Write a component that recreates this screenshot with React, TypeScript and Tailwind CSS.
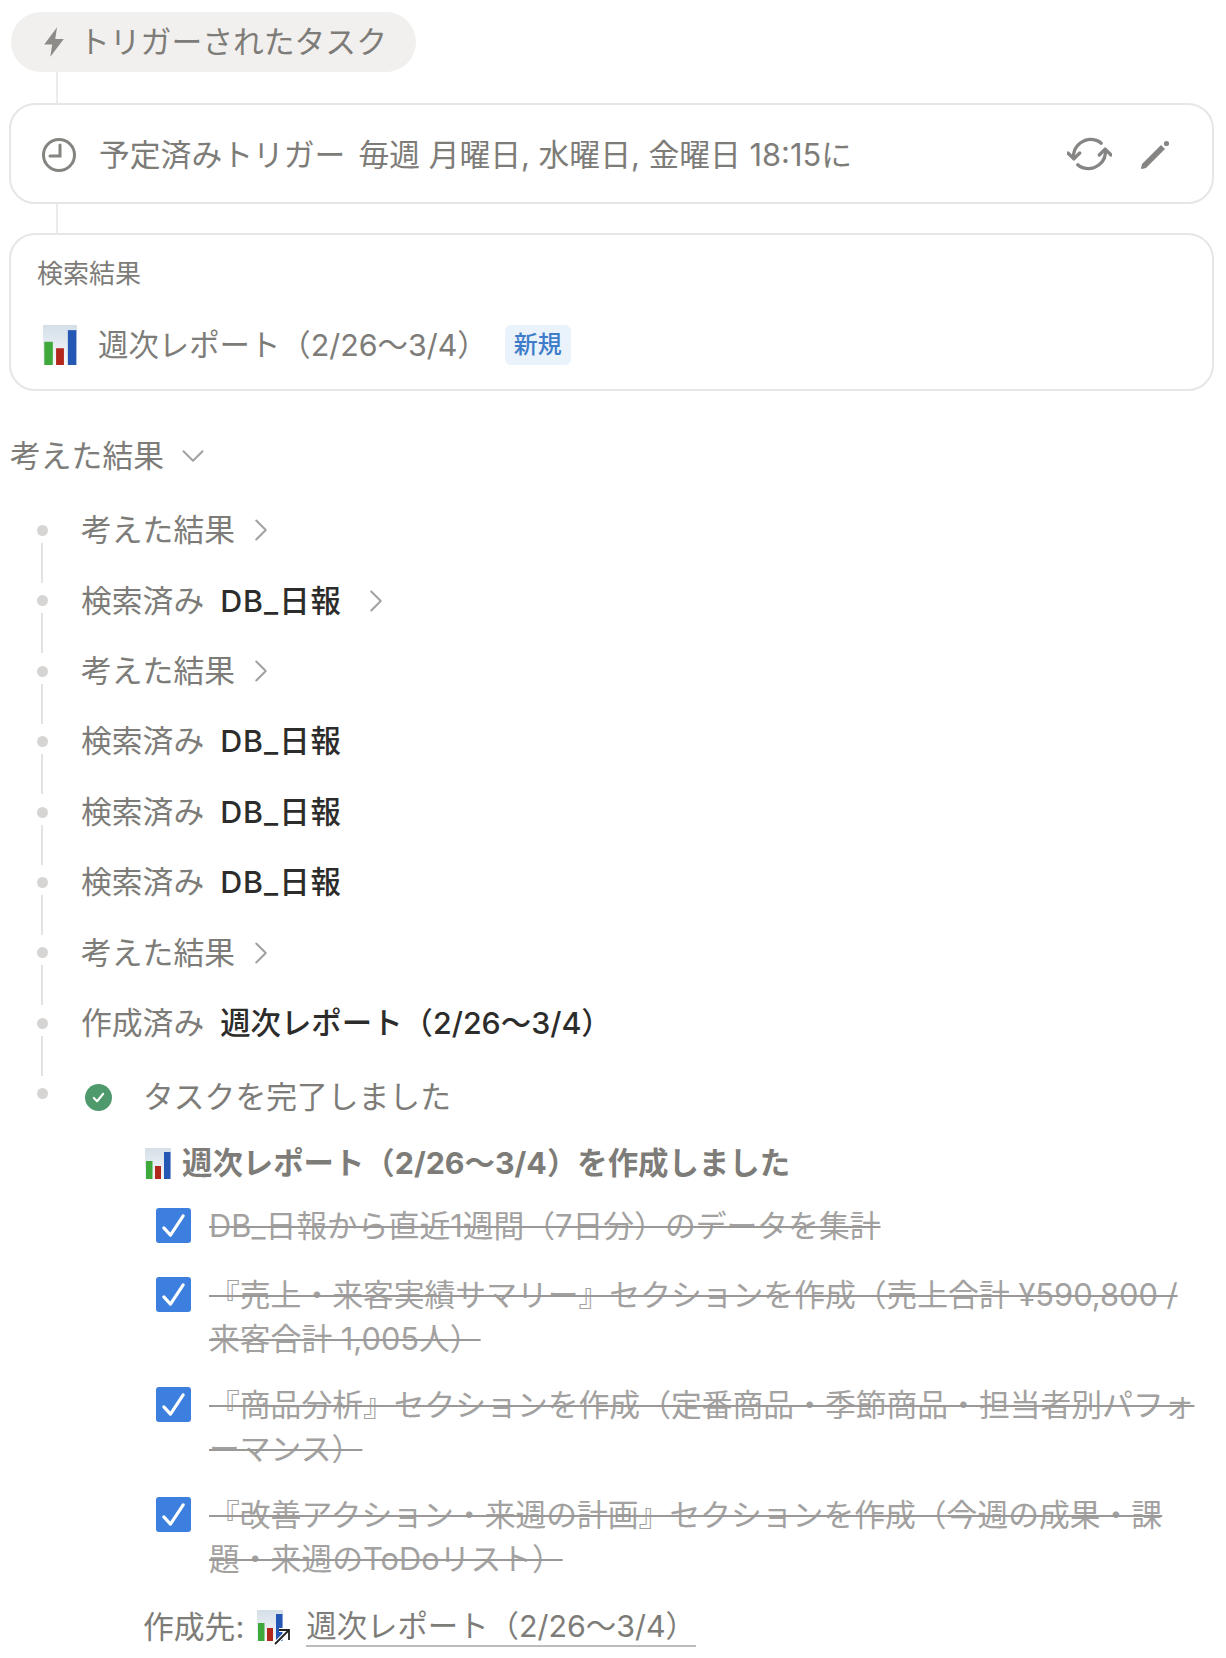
import { ChevronDown, ChevronRight } from "lucide-react";

const ChartIcon = ({ className }: { className: string }) => (
  <svg viewBox="0 0 26 31" className={className} preserveAspectRatio="none">
    <defs>
      <linearGradient id="chartBg" x1="0" y1="0" x2="0" y2="1">
        <stop offset="0" stopColor="#d5dfe8" />
        <stop offset="1" stopColor="#f6f8fa" />
      </linearGradient>
    </defs>
    <rect width="26" height="31" fill="url(#chartBg)" />
    <rect x="1" y="13" width="6.5" height="18" fill="#3fa83a" />
    <rect x="10" y="18" width="6" height="13" fill="#b3261c" />
    <rect x="19" y="4" width="6.5" height="27" fill="#2558b4" />
  </svg>
);

const Connector = ({ className }: { className: string }) => <div className={`ml-[47px] w-[2px] bg-[#ecebe9] ${className}`} />;

const Row = ({ label, name, chevron }: { label: string; name?: string; chevron?: boolean }) => (
  <div className="flex h-[70.4px] items-start">
    <div className="ml-[27px] mr-[33px] flex w-[12px] flex-col items-center pt-[30px]">
      <div className="h-[11px] w-[11px] shrink-0 rounded-full bg-[#d6d5d3]" />
      <div className="mt-[7px] h-[40px] w-[2px] shrink-0 bg-[#e3e2e0]" />
    </div>
    <div className="flex h-full items-center">
      <span className="text-[#7d7c78]">{label}</span>
      {name && (
        <span className={`ml-[16px] text-[30.4px] font-medium text-[#2c2c2b] ${name === "DB_日報" ? "tracking-[1px]" : ""}`}>{name}</span>
      )}
      {chevron && (
        <ChevronRight className={`${name ? "ml-[15px]" : "ml-[7px]"} h-[38px] w-[38px] text-[#a3a2a0]`} strokeWidth={1.3} />
      )}
    </div>
  </div>
);

const Todo = ({ lines, className }: { lines: string[]; className: string }) => (
  <div className={`ml-[71px] flex items-start ${className}`}>
    <div className="mt-[4px] flex h-[35px] w-[35px] shrink-0 items-center justify-center rounded-[3px] bg-[#3d7fdf]">
      <svg viewBox="0 0 24 24" className="h-[29px] w-[29px]" fill="none" stroke="white" strokeWidth="2.6" strokeLinecap="round" strokeLinejoin="round">
        <path d="M4 14l5.5 6L20 4" />
      </svg>
    </div>
    <div className="ml-[18px] text-[#a2a19f] line-through decoration-[#9a9997] decoration-2 leading-[44px] whitespace-nowrap">
      {lines.map((line) => (
        <div key={line}>{line}</div>
      ))}
    </div>
  </div>
);

export default function App() {
  return (
    <div className="h-[1658px] w-[1226px] overflow-hidden bg-white pl-[9px] pr-[12px] pt-[12px] font-['Inter','Noto_Sans_CJK_JP',sans-serif] text-[30.8px] leading-[40px]">
      <div className="ml-[2px] flex h-[60px] w-[405px] items-center rounded-full bg-[#f1f0ee] pl-[32px] text-[#7d7c78]">
        <svg viewBox="0 0 18 24" className="h-[30px] w-[22px]" fill="#8c8b88">
          <path d="M11.5 0 1 14h6.5L6 24 17 9.5h-7z" />
        </svg>
        <span className="ml-[14px]">トリガーされたタスク</span>
      </div>
      <Connector className="h-[31px]" />
      <div className="flex h-[101px] items-center rounded-[26px] border-2 border-[#e7e6e4] pl-[30px] pr-[43px] pt-[3px] text-[#7d7c78]">
        <svg viewBox="0 0 36 36" className="h-[36px] w-[36px]" fill="none" stroke="#858481" strokeWidth="3">
          <circle cx="18" cy="18" r="15.5" />
          <path d="M19 8v11H9" strokeLinecap="round" />
        </svg>
        <span className="ml-[22px]">予定済みトリガー</span>
        <span className="ml-[13px]">毎週 月曜日, 水曜日, 金曜日 18:15に</span>
        <svg viewBox="0 0 46 38" className="ml-auto -mt-[2px] h-[38px] w-[45px]" fill="none" stroke="#868583" strokeWidth="3.4" strokeLinecap="round" strokeLinejoin="round">
          <path d="M7 23C5 11 18 1 30 5c2 .7 3.5 1.6 5 3" />
          <path d="M39 15c2 12-11 22-23 18-2-.7-3.5-1.6-5-3" />
          <path d="M1 18l6 6 6-6" />
          <path d="M33 20l6-6 6 6" />
        </svg>
        <svg viewBox="0 0 28 30" className="ml-[29px] h-[30px] w-[28px]" fill="#868583">
          <path d="M1 24 20 5l4 4L5 28l-4 1c-1 0-1-1-1-1z" />
          <circle cx="25.5" cy="3.5" r="2.6" />
        </svg>
      </div>
      <Connector className="h-[29px]" />
      <div className="h-[158px] rounded-[26px] border-2 border-[#e7e6e4] pl-[26px] pt-[21px]">
        <div className="text-[26px] leading-[36px] text-[#7d7c78]">検索結果</div>
        <div className="mt-[33px] flex items-center">
          <ChartIcon className="ml-[6px] h-[40px] w-[34px]" />
          <span className="ml-[21px] text-[30.4px] text-[#7d7c78]">週次レポート（2/26〜3/4）</span>
          <span className="ml-[17px] rounded-[6px] bg-[#eaf2fb] px-[9px] py-[2px] text-[24px] font-medium leading-[36px] text-[#3f7cc9]">新規</span>
        </div>
      </div>

      <div className="mt-[35px] flex h-[60px] items-center text-[#7d7c78]">
        <span className="ml-[1px]">考えた結果</span>
        <ChevronDown className="ml-[10px] h-[38px] w-[38px] text-[#a3a2a0]" strokeWidth={1.3} />
      </div>

      <div className="mt-[9px]">
        <Row label="考えた結果" chevron />
        <Row label="検索済み" name="DB_日報" chevron />
        <Row label="考えた結果" chevron />
        <Row label="検索済み" name="DB_日報" />
        <Row label="検索済み" name="DB_日報" />
        <Row label="検索済み" name="DB_日報" />
        <Row label="考えた結果" chevron />
        <Row label="作成済み" name="週次レポート（2/26〜3/4）" />
      </div>

      <div className="mt-[19px] flex items-start">
        <div className="ml-[27px] mr-[37px] flex w-[12px] justify-center pt-[11px]">
          <div className="h-[11px] w-[11px] rounded-full bg-[#d6d5d3]" />
        </div>
        <div className="min-w-0 flex-1">
          <div className="flex h-[40px] items-center text-[#7d7c78]">
            <div className="flex h-[27px] w-[27px] items-center justify-center rounded-full bg-[#4f9a6c]">
              <svg viewBox="0 0 16 16" className="h-[15px] w-[15px]" fill="none" stroke="white" strokeWidth="2.2" strokeLinecap="round" strokeLinejoin="round">
                <path d="M3 8.5 6.5 12 13 4" />
              </svg>
            </div>
            <span className="ml-[31px]">タスクを完了しました</span>
          </div>
          <div className="ml-[60px] mt-[26px] flex h-[40px] items-center text-[30.4px] font-bold text-[#7d7c78]">
            <ChartIcon className="h-[31px] w-[26px]" />
            <span className="ml-[11px]">週次レポート（2/26〜3/4）を作成しました</span>
          </div>
          <Todo className="mt-[21px]" lines={["DB_日報から直近1週間（7日分）のデータを集計"]} />
          <Todo className="mt-[25px]" lines={["『売上・来客実績サマリー』セクションを作成（売上合計 ¥590,800 /", "来客合計 1,005人）"]} />
          <Todo className="mt-[22px]" lines={["『商品分析』セクションを作成（定番商品・季節商品・担当者別パフォ", "ーマンス）"]} />
          <Todo className="mt-[22px]" lines={["『改善アクション・来週の計画』セクションを作成（今週の成果・課", "題・来週のToDoリスト）"]} />
          <div className="ml-[58px] mt-[26px] flex h-[40px] items-center text-[#7d7c78]">
            <span>作成先:</span>
            <span className="relative ml-[13px] h-[34px] w-[34px]">
              <ChartIcon className="h-[31px] w-[26px]" />
              <svg viewBox="0 0 18 18" className="absolute -bottom-[1px] right-0 h-[18px] w-[18px]" fill="none" strokeWidth="1.8">
                <path d="M2 17 15 4M6 3h10v10" stroke="white" strokeWidth="4" />
                <path d="M2 17 15 4M6 3h10v10" stroke="#222" />
              </svg>
            </span>
            <span className="ml-[15px] border-b-2 border-[#bdbcba] text-[30.4px] leading-[38px]">週次レポート（2/26〜3/4）</span>
          </div>
        </div>
      </div>
    </div>
  );
}
